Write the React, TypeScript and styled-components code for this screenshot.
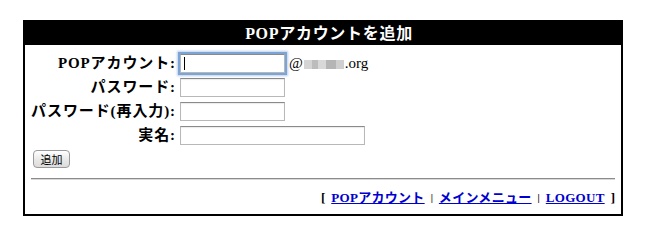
import React from "react";
import styled, { createGlobalStyle } from "styled-components";

const Global = createGlobalStyle`
  html, body { margin: 0; padding: 0; background: #fff; }
  body { font-family: "Liberation Serif", "Noto Sans CJK JP", serif; color: #000; }
`;

const Page = styled.div`
  padding: 20px 22px 0 23px;
`;

const Panel = styled.div`
  width: 600px;
  box-sizing: border-box;
  border: 2px solid #000;
  background: #fff;
`;

const Header = styled.div`
  background: #000;
  color: #fff;
  height: 23px;
  display: flex;
  align-items: center;
  justify-content: center;
  padding-left: 12px;
  font-weight: bold;
  font-size: 16px;
  letter-spacing: 0.7px;
  line-height: 23px;
`;

const Body = styled.div`
  padding: 9px 6px 8px 6px;
`;

const FormGrid = styled.div`
  display: grid;
  grid-template-columns: 145px auto;
  column-gap: 4px;
  row-gap: 5px;
  align-items: center;
`;

const Label = styled.div`
  text-align: right;
  font-weight: bold;
  font-size: 15px;
  line-height: 19px;
  white-space: nowrap;
  letter-spacing: 0.9px;
`;

const Field = styled.div`
  display: flex;
  align-items: center;
  gap: 4px;
  font-size: 15px;
`;

const InputWrap = styled.div`
  position: relative;
  display: flex;
`;

const TextInput = styled.input<{ $w: number; $focus?: boolean }>`
  box-sizing: border-box;
  width: ${(p) => p.$w}px;
  height: 19px;
  margin: 0;
  padding: 0 3px;
  border: 1px solid #b8b8b8;
  border-top-color: #8a8a8a;
  background: #fff;
  font-size: 13px;
  outline: none;
  box-shadow: ${(p) =>
    p.$focus ? "0 0 0 2px #7aa5d6, 0 0 2px 3px rgba(120,160,215,0.5)" : "inset 0 1px 1px rgba(0,0,0,0.08)"};
`;

const Caret = styled.span`
  position: absolute;
  left: 4px;
  top: 3px;
  width: 1px;
  height: 13px;
  background: #000;
`;

const Domain = styled.span`
  display: inline-flex;
  align-items: baseline;
  font-size: 15px;
  margin-left: 0;
`;

const Blur = styled.span`
  display: inline-block;
  width: 40px;
  height: 9px;
  margin: 0 1px;
  background: linear-gradient(90deg, #d4d4d4 0 20%, #bcbcbc 20% 35%, #d8d8d8 35% 55%, #b5b5b5 55% 80%, #cfcfcf 80% 100%);
  align-self: center;
  transform: translateY(1px);
`;

const Button = styled.button`
  display: block;
  margin: 5px 0 0 2px;
  width: 37px;
  height: 18px;
  padding: 0;
  border: 1px solid #9a9a9a;
  border-radius: 4px;
  background: linear-gradient(#ffffff, #e8e8e8 55%, #dcdcdc);
  font-family: "Noto Sans CJK JP", sans-serif;
  font-size: 11px;
  line-height: 16px;
  color: #000;
`;

const Rule = styled.hr`
  margin: 10px 0 0 0;
  border: 0;
  border-top: 1px solid #8c8c8c;
  border-bottom: 1px solid #d8d8d8;
  height: 0;
`;

const Footer = styled.div`
  display: flex;
  justify-content: flex-end;
  align-items: center;
  gap: 6px;
  padding: 9px 0 0 0;
  font-size: 13px;
  font-weight: bold;
  line-height: 17px;
`;

const FootLink = styled.a`
  color: #0000d0;
  text-decoration: underline;
  font-weight: bold;
  letter-spacing: 0.3px;
`;

const Sep = styled.span`
  font-size: 10px;
  color: #000;
`;

export default function App() {
  return (
    <>
      <Global />
      <Page>
        <Panel>
          <Header>POPアカウントを追加</Header>
          <Body>
            <FormGrid>
              <Label>POPアカウント:</Label>
              <Field>
                <InputWrap>
                  <TextInput $w={105} $focus />
                  <Caret />
                </InputWrap>
                <Domain>
                  @<Blur />.org
                </Domain>
              </Field>
              <Label>パスワード:</Label>
              <Field>
                <TextInput $w={105} type="password" />
              </Field>
              <Label>パスワード(再入力):</Label>
              <Field>
                <TextInput $w={105} type="password" />
              </Field>
              <Label>実名:</Label>
              <Field>
                <TextInput $w={185} />
              </Field>
            </FormGrid>
            <Button>追加</Button>
            <Rule />
            <Footer>
              <span>[</span>
              <FootLink href="#">POPアカウント</FootLink>
              <Sep>|</Sep>
              <FootLink href="#">メインメニュー</FootLink>
              <Sep>|</Sep>
              <FootLink href="#">LOGOUT</FootLink>
              <span>]</span>
            </Footer>
          </Body>
        </Panel>
      </Page>
    </>
  );
}
